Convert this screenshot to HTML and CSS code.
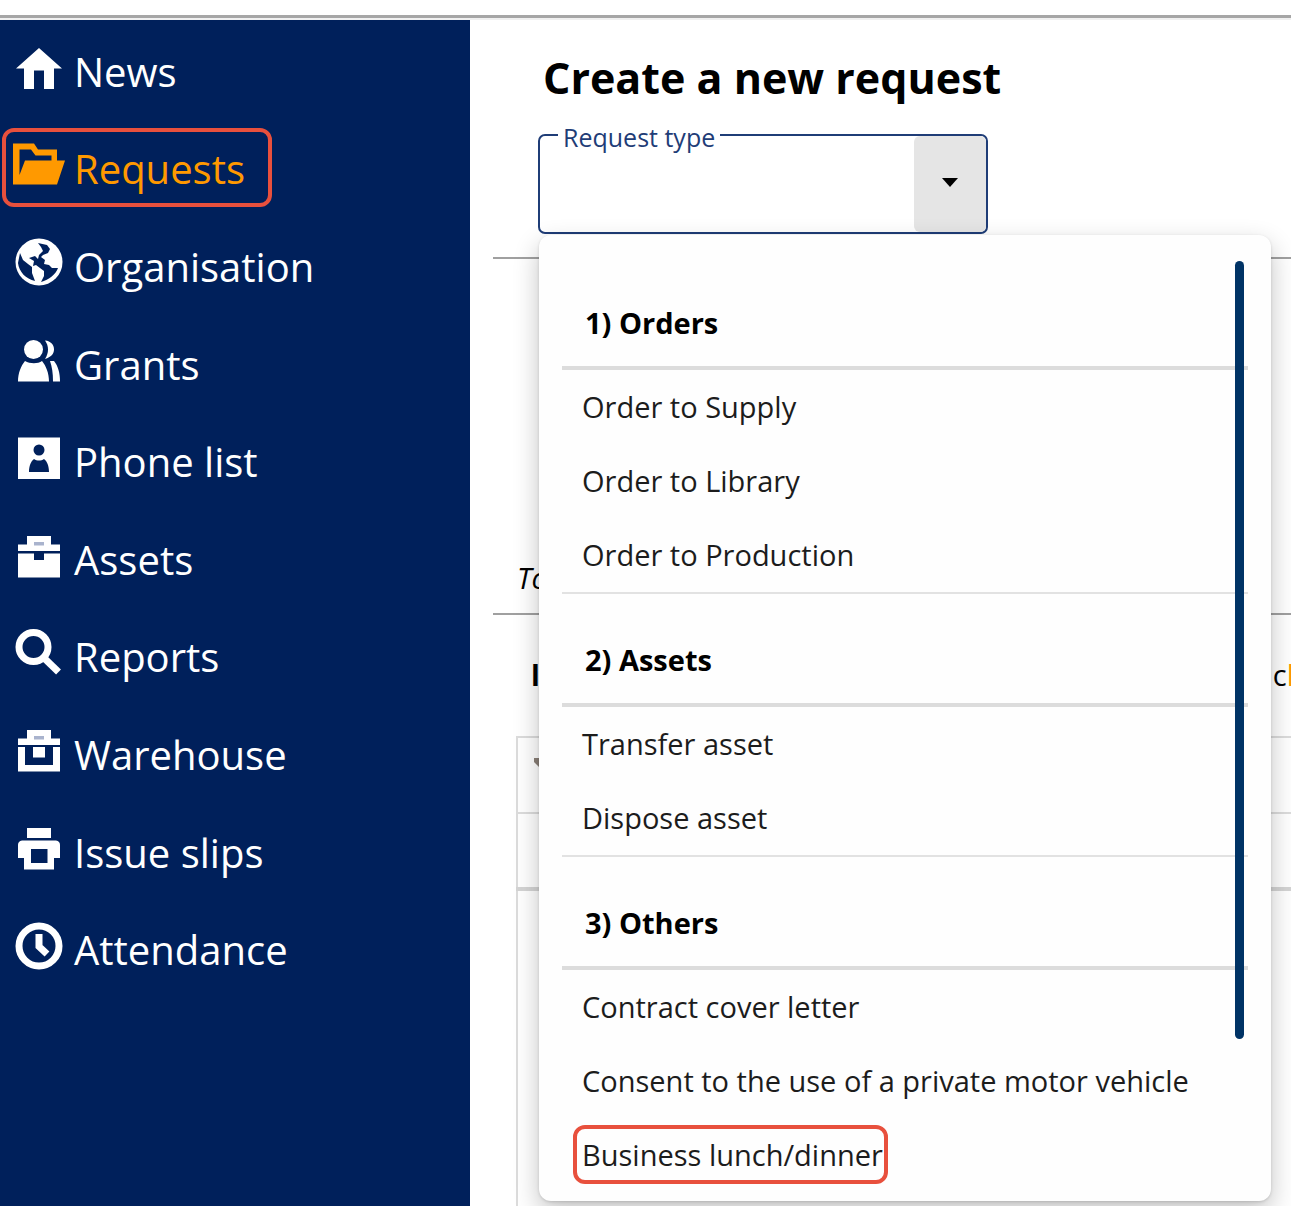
FILE: index.html
```html
<!DOCTYPE html>
<html lang="en">
<head>
    <meta charset="UTF-8">
    <meta name="viewport" content="width=device-width, initial-scale=1.0">
    <title>Requests</title>
    <link rel="stylesheet" href="styles.css">
</head>
<body>

<header class="topbar"></header>

<div class="layout">
    <nav class="sidebar">
        <ul class="nav-list">
            <li>
                <a class="nav-link" href="#news">
                    <svg class="icon" viewBox="0 0 56 56"><path d="M28 6L51 26.5H43V47H33V28.500H23V47H13V26.500H5Z"/></svg>
                    News
                </a>
            </li>
            <li>
                <a class="nav-link active marked" href="#requests">
                    <svg class="icon" viewBox="0 0 56 56"><path fill-rule="evenodd" d="M2 4.500H23L27 10.500H46V21.500H54L46 45.500H2ZM8.500 10.500V36L14 21.500H40.500V16.500H24.500L20 10.500Z"/></svg>
                    Requests
                </a>
            </li>
            <li>
                <a class="nav-link" href="#organisation">
                    <svg class="icon" viewBox="0 0 56 56">
                        <circle cx="28" cy="25" r="23.500"/>
                        <path class="cut" d="M27 6L36 8L39 12L37 16L32 18L30 20L34 23L33 27L38 28L41 31L47 31C45 37 38 43 30 45L33 39L33 34L29 31L25 28L22 29L23 24L18 21L24 19L27 22L28 18L32 14L30 10ZM9 16L12 23L17 27L21 30L21 36L24 44C15 42 8 35 7 26Z"/>
                    </svg>
                    Organisation
                </a>
            </li>
            <li>
                <a class="nav-link" href="#grants">
                    <svg class="icon" viewBox="0 0 56 56">
                        <circle cx="22.500" cy="14.500" r="9.500"/>
                        <path d="M7 46.500C7 38 10 31 14 26C19 29 27 29 31 26C35 31 38 38 38 46.500ZM34 5.500C40 6 43 10 43 14.500C43 19 40 22 34 24C38 18 38 11 34 5.500ZM39 26H43C47 31 49 38 49 46.500H42C42 38 41 32 39 26Z"/>
                    </svg>
                    Grants
                </a>
            </li>
            <li>
                <a class="nav-link" href="#phone-list">
                    <svg class="icon" viewBox="0 0 56 56">
                        <path d="M7 5.500H49V47H7Z"/>
                        <circle class="cut" cx="28" cy="18" r="5.500"/>
                        <path class="cut" d="M18 40C18 34 20 29 23 27C26 29 30 29 33 27C36 29 38 34 38 40Z"/>
                    </svg>
                    Phone list
                </a>
            </li>
            <li>
                <a class="nav-link" href="#assets">
                    <svg class="icon" viewBox="0 0 56 56">
                        <path fill-rule="evenodd" d="M16 6H40V14.500H49V21H7V14.500H16ZM7 23.500H23V30H33V23.500H49V47.500H7Z"/>
                        <path class="faint" d="M23 12H33V15.500H23Z"/>
                    </svg>
                    Assets
                </a>
            </li>
            <li>
                <a class="nav-link" href="#reports">
                    <svg class="icon" viewBox="0 0 56 56">
                        <circle class="line" cx="22.500" cy="20" r="14.500"/>
                        <path class="line" d="M32 30L47.500 45"/>
                    </svg>
                    Reports
                </a>
            </li>
            <li>
                <a class="nav-link" href="#warehouse">
                    <svg class="icon" viewBox="0 0 56 56">
                        <path fill-rule="evenodd" d="M16 5H40V13.500H49V20H7V13.500H16ZM7 22H14V40H42V22H49V46.500H7ZM22 22H34V32.500H22Z"/>
                        <path class="faint" d="M23 11H33V14.500H23Z"/>
                    </svg>
                    Warehouse
                </a>
            </li>
            <li>
                <a class="nav-link" href="#issue-slips">
                    <svg class="icon" viewBox="0 0 56 56">
                        <path fill-rule="evenodd" d="M16 5H40V15H16ZM11 17.500H45Q49 18 49 22V35H43V46.500H13V35H7V22Q7 18 11 17.500ZM20 26V40H36.500V26Z"/>
                    </svg>
                    Issue slips
                </a>
            </li>
            <li>
                <a class="nav-link" href="#attendance">
                    <svg class="icon" viewBox="0 0 56 56">
                        <circle class="line" cx="28" cy="26" r="20"/>
                        <path class="line" d="M28 14V26.500L36 34"/>
                    </svg>
                    Attendance
                </a>
            </li>
        </ul>
    </nav>

    <main class="content">
        <form class="request-form">
            <h1>Create a new request</h1>
            <fieldset class="field">
                <legend><label for="requestType">Request type</label></legend>
                <select id="requestType">
                    <option value=""></option>
                </select>
                <span class="arrow"></span>
            </fieldset>

            <div class="dropdown">
                <section class="group">
                    <h2>1) Orders</h2>
                    <ul>
                        <li><a href="#supply">Order to Supply</a></li>
                        <li><a href="#library">Order to Library</a></li>
                        <li><a href="#production">Order to Production</a></li>
                    </ul>
                </section>
                <section class="group">
                    <h2>2) Assets</h2>
                    <ul>
                        <li><a href="#transfer">Transfer asset</a></li>
                        <li><a href="#dispose">Dispose asset</a></li>
                    </ul>
                </section>
                <section class="group">
                    <h2>3) Others</h2>
                    <ul>
                        <li><a href="#contract">Contract cover letter</a></li>
                        <li><a href="#vehicle">Consent to the use of a private motor vehicle</a></li>
                        <li><a class="marked" href="#lunch">Business lunch/dinner</a></li>
                    </ul>
                </section>
                <div class="scroll-thumb"></div>
            </div>
        </form>

        <!-- request overview, mostly covered by the open list -->
        <section class="overview">
            <p class="hint">To</p>
        </section>
        <section class="filters">
            <b>l</b>
            <span class="check">c<a href="#clear">l</a></span>
        </section>
        <table class="results">
            <thead>
                <tr><th><svg class="filter-icon" viewBox="0 0 16 16"><path d="M0 0H16V4L8 12L0 4Z"/></svg></th></tr>
            </thead>
            <tbody>
                <tr><td></td></tr>
                <tr><td></td></tr>
            </tbody>
        </table>
    </main>
</div>

</body>
</html>
```
FILE: styles.css
```css
* {
    box-sizing: border-box;
}
body {
    font-family: "Open Sans", "Noto Sans", sans-serif;
    background-color: #fff;
    color: #000;
    margin: 0;
    min-height: 100vh;
    display: flex;
    flex-direction: column;
}
ul {
    list-style: none;
    margin: 0;
    padding: 0;
}
a {
    color: inherit;
    text-decoration: none;
}
.topbar {
    height: 20px;
    border-bottom: 2px solid #f0f0f0;
    background: linear-gradient(#fff 15px, #a6a6a6 15px);
}
.layout {
    flex: 1;
    display: flex;
}
.marked {
    border: 4px solid #e8503d;
    border-radius: 12px;
}

/* sidebar */
.sidebar {
    flex: 0 0 470px;
    padding-top: 1px;
    background-color: #00205b;
    color: #fff;
}
.nav-list {
    display: grid;
    grid-auto-rows: 1fr;
    min-height: 976px;
}
.nav-list li {
    display: flex;
    align-items: center;
    padding-left: 2px;
}
.nav-link {
    display: flex;
    align-items: center;
    gap: 7px;
    height: 79px;
    padding: 4px 29px 0 9px;
    font-size: 40px;
    line-height: 56px;
}
.nav-link.marked {
    padding: 4px 23px 0 5px;
}
.active {
    color: #ff9900;
}
.icon {
    width: 56px;
    height: 56px;
    margin-bottom: 4px;
    fill: currentColor;
}
.icon .cut {
    fill: #00205b;
}
.icon .faint {
    fill: #a9b3cd;
}
.icon .line {
    fill: none;
    stroke: currentColor;
    stroke-width: 7px;
}

/* request form */
.content {
    flex: 1;
    min-width: 0;
    padding-left: 23px;
    overflow: hidden;
}
.request-form {
    position: relative;
    padding: 28px 0 23px 45px;
    border-bottom: 2px solid #a0a0a0;
}
h1 {
    margin: 0 5px 9px;
    font-size: 43px;
    line-height: 60px;
}
.field {
    display: grid;
    width: 450px;
    margin: 0;
    padding: 0;
    border: 2px solid #1f3d77;
    border-radius: 7px;
}
.field legend {
    margin-left: 18px;
    padding: 4px 5px 0;
    color: #1f3d77;
    font-size: 25px;
    line-height: 32px;
}
.field select {
    grid-area: 1 / 1;
    height: 79px;
    padding: 0 80px 0 20px;
    border: 0;
    appearance: none;
    background: none;
    font: inherit;
    font-size: 29px;
}
.arrow {
    grid-area: 1 / 1;
    justify-self: end;
    display: grid;
    place-items: center;
    width: 72px;
    margin-top: -17px;
    padding-bottom: 3px;
    border-radius: 6px;
    background-color: #e5e5e5;
    pointer-events: none;
}
.arrow::after {
    content: "";
    border: 8px solid transparent;
    border-top: 9px solid #000;
    border-bottom: 0;
}
.dropdown {
    position: absolute;
    top: 215px;
    left: 46px;
    z-index: 1;
    width: 732px;
    padding: 22px 23px 9px;
    border-radius: 12px;
    background-color: #fefefe;
    box-shadow: 0 10px 26px rgba(0, 0, 0, 0.24), 0 1px 3px rgba(0, 0, 0, 0.14);
}
.group h2 {
    margin: 0;
    padding: 24px 23px 0;
    height: 113px;
    border-bottom: 4px solid #dcdcdc;
    font-size: 29px;
    line-height: 84px;
}
.group + .group {
    border-top: 2px solid #e2e2e2;
}
.group li {
    display: flex;
    align-items: center;
    height: 74px;
    padding: 0 0 2px 11px;
}
.group li a {
    padding: 4px 9px;
    font-size: 29px;
    line-height: 51px;
    color: #1c1c1c;
}
.group li .marked {
    padding: 0 1px 0 5px;
}
.scroll-thumb {
    position: absolute;
    top: 26px;
    right: 27px;
    width: 9px;
    height: 778px;
    border-radius: 5px;
    background-color: #003365;
}

/* overview behind the list */
.overview {
    padding: 298px 24px 14px;
    border-bottom: 2px solid #a0a0a0;
}
.hint {
    margin: 0;
    font-size: 29px;
    font-style: italic;
    line-height: 42px;
}
.filters {
    display: flex;
    justify-content: space-between;
    padding: 38px 0 39px 38px;
    font-size: 29px;
    line-height: 44px;
    white-space: nowrap;
}
.check {
    margin-right: -3px;
}
.check a {
    color: #ff9900;
}
.results {
    width: 100%;
    margin-left: 23px;
    border-collapse: collapse;
    border: 2px solid #dcdcdc;
    border-bottom: 0;
}
.results th, .results td {
    height: 76px;
    padding: 0 16px;
    border-top: 2px solid #dcdcdc;
    text-align: left;
}
.results th {
    padding-bottom: 18px;
}
.results tr + tr td {
    border-top: 4px solid #d4d4d4;
}
.results tr:last-child td {
    height: 317px;
}
.filter-icon {
    display: block;
    width: 16px;
    height: 16px;
    fill: #8a8078;
}
```
